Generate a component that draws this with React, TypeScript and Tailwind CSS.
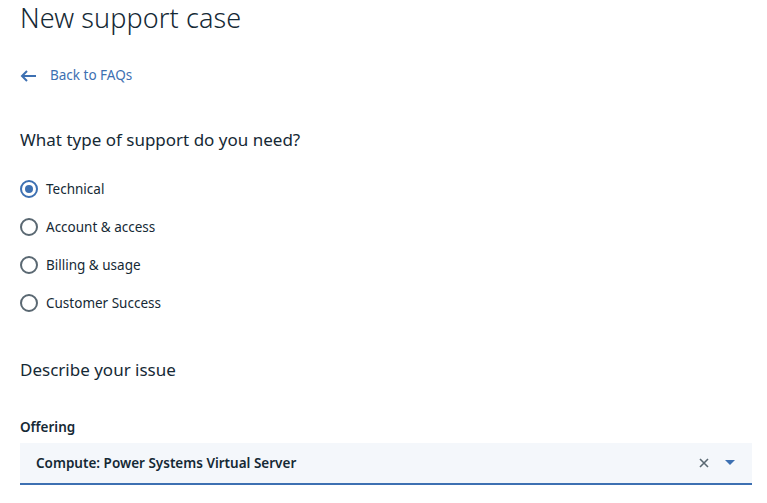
import React, { useState } from "react";

const options = ["Technical", "Account & access", "Billing & usage", "Customer Success"];

function Radio({ checked }: { checked: boolean }) {
  return (
    <span
      className={`flex h-[18px] w-[18px] items-center justify-center rounded-full border-2 ${
        checked ? "border-[#3d70b2]" : "border-[#5a6872]"
      }`}
    >
      {checked && <span className="h-[8px] w-[8px] rounded-full bg-[#3d70b2]" />}
    </span>
  );
}

export default function App() {
  const [selected, setSelected] = useState("Technical");

  return (
    <div
      className="min-h-screen bg-white pl-5 text-[#152935]"
      style={{ fontFamily: '"Noto Sans", "Open Sans", sans-serif' }}
    >
      {/* Title */}
      <h1 className="h-[36px] text-[27px] font-light leading-[36px] tracking-[0.1px]">New support case</h1>

      {/* Back link */}
      <a href="#" className="mt-[28px] flex h-[22px] items-center gap-[13px] text-[13.5px] text-[#3d70b2]">
        <svg width="17" height="12" viewBox="0 0 17 12" fill="none" className="mt-[1px]">
          <path d="M16 6H2M7 1L2 6l5 5" stroke="#3d70b2" strokeWidth="2" />
        </svg>
        Back to FAQs
      </a>

      {/* Support type */}
      <h2 className="mt-[42px] flex h-[24px] items-center text-[17px] font-normal">
        What type of support do you need?
      </h2>

      <div className="mt-[18px] flex flex-col">
        {options.map((o) => (
          <label
            key={o}
            className="flex h-[38px] cursor-pointer items-center gap-[8px] text-[13.5px]"
            onClick={() => setSelected(o)}
          >
            <Radio checked={selected === o} />
            {o}
          </label>
        ))}
      </div>

      {/* Describe */}
      <h2 className="mt-[36px] flex h-[24px] items-center text-[17px] font-normal">Describe your issue</h2>

      <div className="mt-[35px] flex h-[20px] items-center text-[13.5px] font-semibold">Offering</div>

      <div className="mt-[6px] flex h-[42px] w-[732px] items-center justify-between border-b-2 border-[#3d70b2] bg-[#f4f7fb] pl-4 pr-[17px]">
        <span className="text-[13.5px] font-semibold">Compute: Power Systems Virtual Server</span>
        <div className="flex items-center gap-[16px]">
          <svg width="10" height="10" viewBox="0 0 10 10">
            <path d="M1 1l8 8M9 1l-8 8" stroke="#5a6872" strokeWidth="1.6" />
          </svg>
          <svg width="10" height="6" viewBox="0 0 10 6">
            <path d="M0 0h10L5 5z" fill="#3d70b2" />
          </svg>
        </div>
      </div>
    </div>
  );
}
